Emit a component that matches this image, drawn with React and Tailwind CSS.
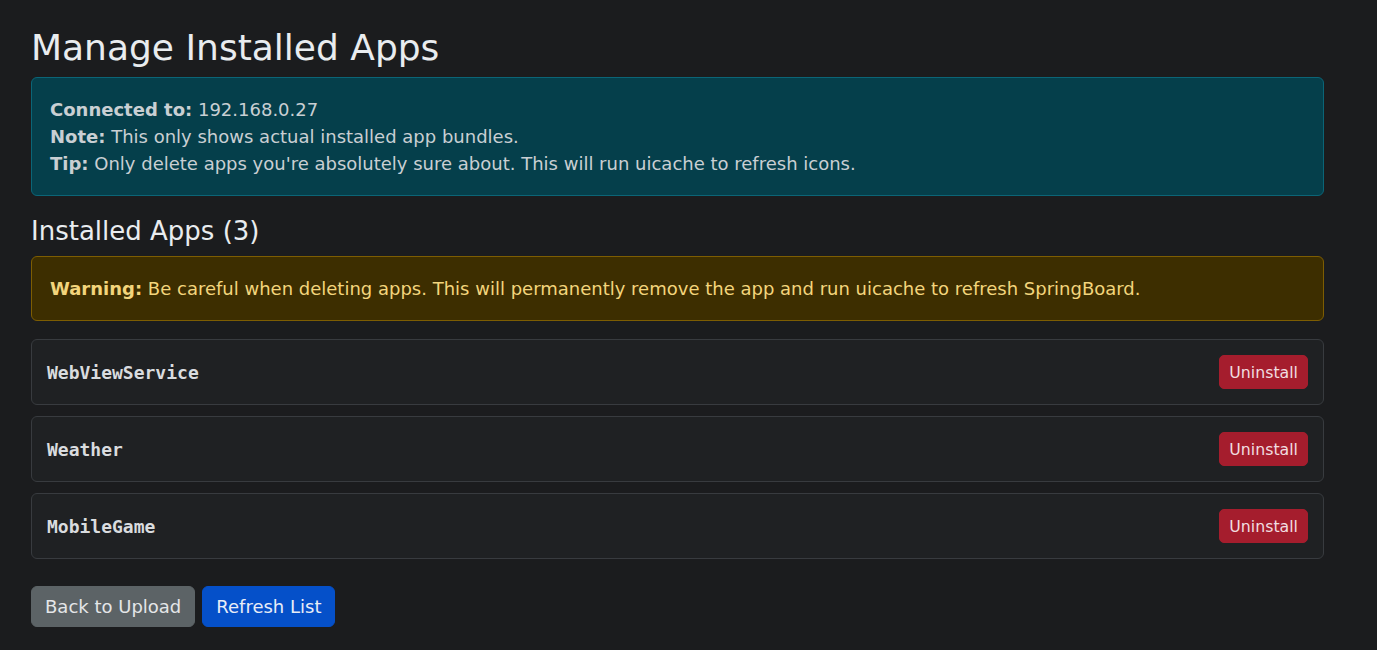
export default function App() {
  const apps = ['WebViewService', 'Weather', 'MobileGame'];

  return (
    <div className="min-h-[650px] bg-[#1b1c1e] pl-[31px] pt-[26px] pb-6 text-[18px] leading-[27px] text-[#dee2e6]" style={{ fontFamily: '"DejaVu Sans", "Liberation Sans", sans-serif' }}>
      <div className="w-[1293px]">
        <h1 className="mb-2 text-[36px] font-normal leading-[1.2] text-[#e9ecef]">Manage Installed Apps</h1>

        {/* connection info */}
        <div className="rounded-md border border-[#0b6577] bg-[#053f4b] p-[18px] text-[#c9cfd3]">
          <div><strong className="font-bold">Connected to:</strong> 192.168.0.27</div>
          <div><strong className="font-bold">Note:</strong> This only shows actual installed app bundles.</div>
          <div><strong className="font-bold">Tip:</strong> Only delete apps you're absolutely sure about. This will run uicache to refresh icons.</div>
        </div>

        <h2 className="mt-5 mb-[9px] text-[26px] font-normal leading-[1.2] text-[#e9ecef]">Installed Apps (3)</h2>

        <div className="rounded-md border border-[#7d5d02] bg-[#3d2e00] px-[18px] pt-[17.5px] pb-[18.5px] text-[#f3d57c]">
          <strong className="font-bold">Warning:</strong> Be careful when deleting apps. This will permanently remove the app and run uicache to refresh SpringBoard.
        </div>

        <div className="mt-[18px] flex flex-col gap-[11px]">
          {apps.map((name) => (
            <div key={name} className="flex items-center justify-between rounded-md border border-[#383b3f] bg-[#1f2123] py-[15px] pr-[15px] pl-[15px]">
              <span className="text-[18px] font-bold text-[#d9dcdf]" style={{ fontFamily: '"DejaVu Sans Mono", "Liberation Mono", monospace' }}>{name}</span>
              <button className="rounded-[5px] border border-[#a51d2d] bg-[#a51d2d] px-[9px] py-[4.5px] text-[15.75px] leading-[23px] text-[#f1dde0]">Uninstall</button>
            </div>
          ))}
        </div>

        <div className="mt-[27px] flex gap-[7px]">
          <button className="rounded-md border border-[#5c6366] bg-[#5c6366] px-[13px] py-[6px] text-[18px] leading-[27px] text-[#e4e6e8]">Back to Upload</button>
          <button className="rounded-md border border-[#0550c9] bg-[#0550c9] px-[13px] py-[6px] text-[18px] leading-[27px] text-[#e8edf7]">Refresh List</button>
        </div>
      </div>
    </div>
  );
}
